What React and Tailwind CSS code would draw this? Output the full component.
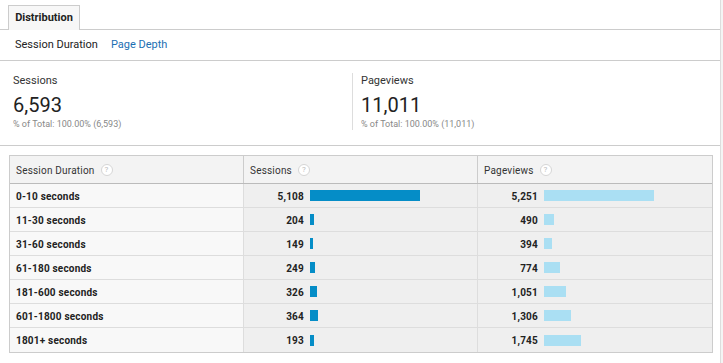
import React from 'react';

const rows = [
  { label: '0-10 seconds', sessions: '5,108', sw: 110, pageviews: '5,251', pw: 110 },
  { label: '11-30 seconds', sessions: '204', sw: 4, pageviews: '490', pw: 10 },
  { label: '31-60 seconds', sessions: '149', sw: 3, pageviews: '394', pw: 8 },
  { label: '61-180 seconds', sessions: '249', sw: 5, pageviews: '774', pw: 16 },
  { label: '181-600 seconds', sessions: '326', sw: 7, pageviews: '1,051', pw: 22 },
  { label: '601-1800 seconds', sessions: '364', sw: 8, pageviews: '1,306', pw: 27 },
  { label: '1801+ seconds', sessions: '193', sw: 4, pageviews: '1,745', pw: 37 },
];

function Help() {
  return (
    <span className="ml-[6px] inline-flex h-[12px] w-[12px] items-center justify-center rounded-full border border-[#d6d6d6] bg-white text-[8px] leading-none text-[#bbb]">
      ?
    </span>
  );
}

function Metric({ label, value, total, divider }) {
  return (
    <div className={`flex-1 ${divider ? 'border-l border-[#ddd] pl-[8px]' : 'pl-[13px]'} my-[12px]`}>
      <div className="pt-[1px] text-[11px] leading-[14px] text-[#333]">{label}</div>
      <div className="mt-[6px] text-[20px] leading-[23px] text-[#222]">{value}</div>
      <div className="mt-[1px] text-[9px] leading-[12px] text-[#888]">{total}</div>
    </div>
  );
}

export default function App() {
  return (
    <div className="flex h-[363px] w-[723px] bg-[#f4f4f4]" style={{ fontFamily: 'Roboto, "Liberation Sans", sans-serif' }}>
      <div className="w-[721px] border-r border-[#ddd] bg-white">
        {/* Tab bar */}
        <div className="flex h-[30px] items-end border-b border-[#ccc] pl-[8px]">
          <div className="-mb-px flex h-[25px] w-[72px] items-center justify-center border border-b-0 border-[#ccc] bg-[#f7f7f7] text-[11px] font-bold text-[#222]">
            Distribution
          </div>
        </div>

        {/* Sub tabs */}
        <div className="flex h-[31px] items-center gap-[13px] border-b border-[#ccc] pl-[15px] text-[11px]">
          <span className="text-[#222]">Session Duration</span>
          <span className="text-[#1b6fb3]">Page Depth</span>
        </div>

        {/* Metrics */}
        <div className="flex h-[85px] border-b border-[#ccc]">
          <div className="w-[352px]">
            <Metric label="Sessions" value="6,593" total="% of Total: 100.00% (6,593)" />
          </div>
          <div className="flex-1">
            <Metric label="Pageviews" value="11,011" total="% of Total: 100.00% (11,011)" divider />
          </div>
        </div>

        {/* Table */}
        <div className="ml-[9px] mt-[9px] w-[704px] border border-[#ccc] text-[10px] tracking-[0.2px]">
          <div className="flex h-[28px] border-b border-[#bbb] bg-[#f3f3f3] text-[#333]">
            <div className="flex w-[234px] items-center border-r border-[#ccc] pl-[6px] pt-[1px]">
              Session Duration <Help />
            </div>
            <div className="flex w-[234px] items-center border-r border-[#ccc] pl-[6px] pt-[1px]">
              Sessions <Help />
            </div>
            <div className="flex flex-1 items-center pl-[6px] pt-[1px]">
              Pageviews <Help />
            </div>
          </div>
          {rows.map((r, i) => (
            <div key={r.label} className={`flex h-[24px] font-bold text-[#222] ${i < rows.length - 1 ? 'border-b border-[#ddd]' : ''}`}>
              <div className="flex w-[234px] items-center border-r border-[#ddd] bg-[#f8f8f8] pl-[6px] pt-[1px]">{r.label}</div>
              <div className="flex w-[234px] items-center border-r border-[#ddd] bg-[#efefef]">
                <span className="w-[60px] pt-[1px] text-right">{r.sessions}</span>
                <span className="ml-[6px] h-[11px] bg-[#058dc7]" style={{ width: r.sw }} />
              </div>
              <div className="flex flex-1 items-center bg-[#efefef]">
                <span className="w-[60px] pt-[1px] text-right">{r.pageviews}</span>
                <span className="ml-[6px] h-[11px] bg-[#aadff3]" style={{ width: r.pw }} />
              </div>
            </div>
          ))}
        </div>
      </div>
    </div>
  );
}
